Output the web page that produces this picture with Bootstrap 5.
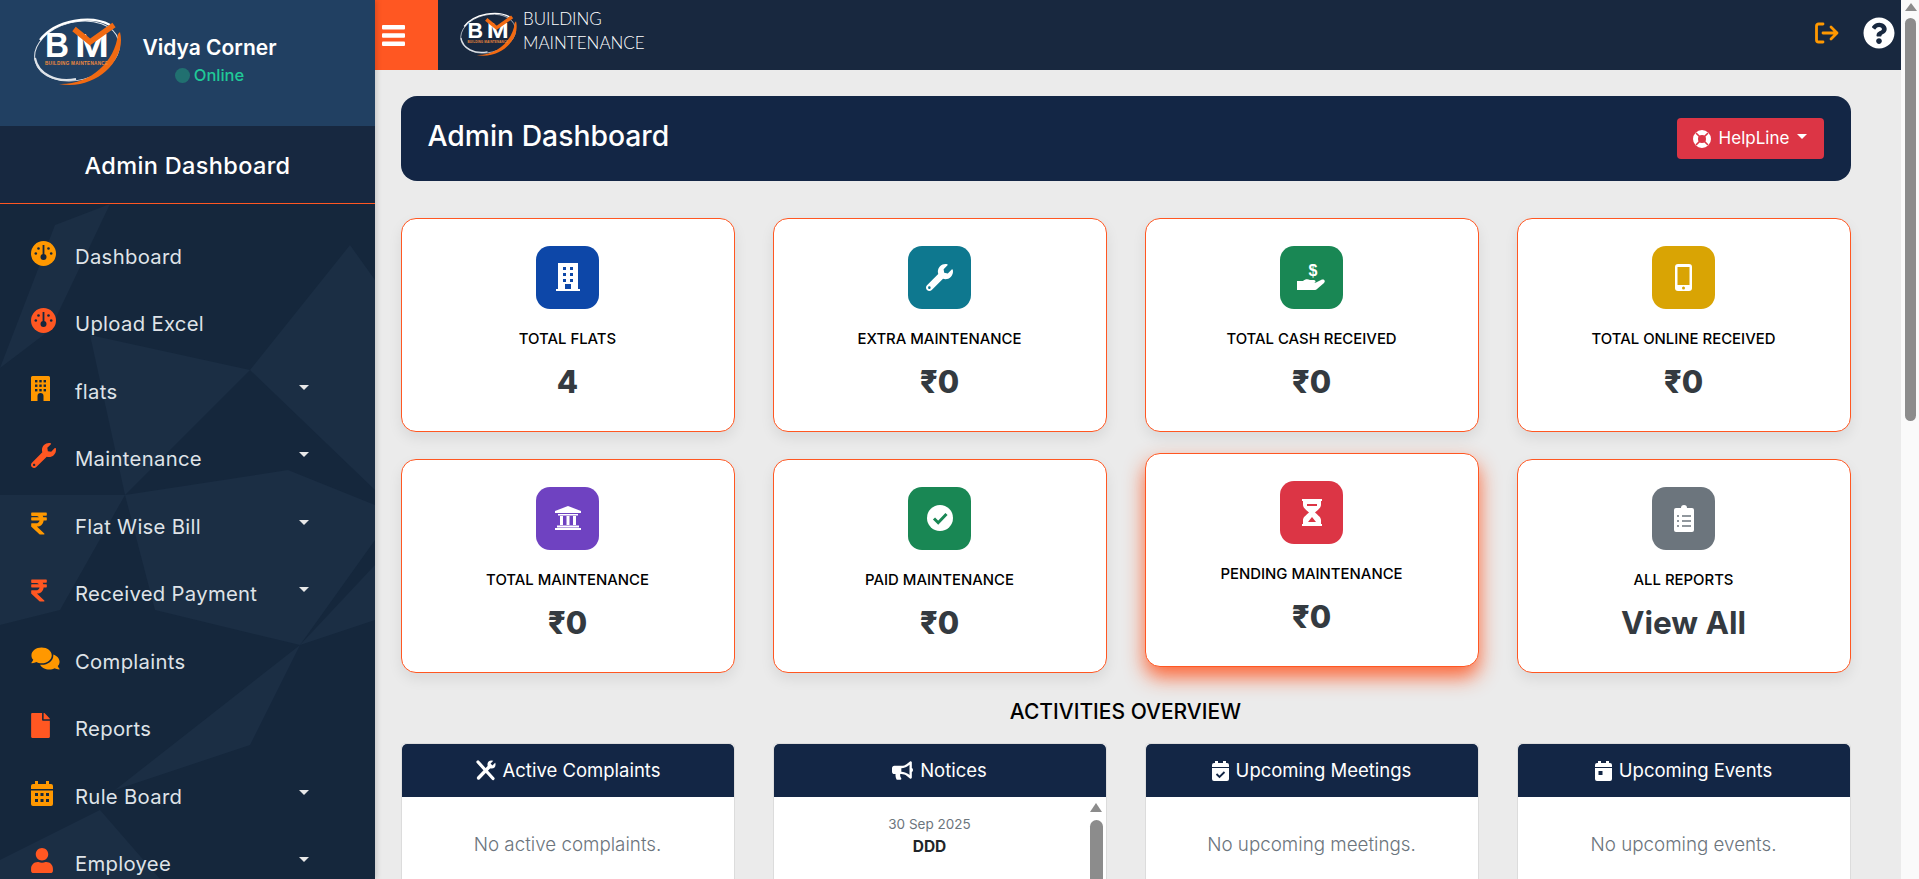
<!DOCTYPE html>
<html lang="en">
<head>
<meta charset="utf-8">
<title>Admin Dashboard</title>
<link href="https://cdn.jsdelivr.net/npm/bootstrap@5.3.0/dist/css/bootstrap.min.css" rel="stylesheet">
<style>
html,body{height:879px;overflow:hidden}
body{font-family:Inter,"Noto Sans",sans-serif;background:#ebebeb}
.app-shell{height:879px}
.side-bar{width:375px;flex:none;position:relative;overflow:hidden;background:#15273c;color:#fff;box-shadow:2px 0 5px rgba(0,0,0,.15);z-index:2}
.side-pattern{position:absolute;left:0;top:0;width:375px;height:879px}
.side-top{height:126px;background:#214062;position:relative}
.side-logo{width:91px;height:71px;margin-left:32px;margin-top:16px;flex:none}
.side-user{margin-left:15px;margin-top:-4px;width:143px;text-align:center}
.user-name{font-size:21px;font-weight:600;line-height:26px;white-space:nowrap}
.user-state{font-size:16.5px;font-weight:500;line-height:24px;color:#20c997;white-space:nowrap;margin-top:2px}
.state-dot{display:inline-block;width:15px;height:15px;border-radius:50%;background:#217070;vertical-align:-2px;margin-right:4px}
.side-title{height:78px;background:#172840;border-bottom:1px solid #ff5722;font-size:23.5px;font-weight:500;letter-spacing:.35px;padding-top:3px;position:relative}
.side-nav{position:relative;padding-top:19px}
.nav-line{height:67.5px;padding-left:31px;color:#dfe3e8;font-size:20.3px;font-weight:400;letter-spacing:.3px;text-decoration:none}
.nav-slot{width:44px;flex:none;display:flex;margin-bottom:7px}
.tone-a{color:#ff9800}
.tone-b{color:#ff5722}
.nav-caret{margin-left:auto;margin-right:66px;margin-bottom:9px;width:0;height:0;border-left:5px solid transparent;border-right:5px solid transparent;border-top:5px solid #e8e8e8}
.main-col{min-width:0;overflow:hidden}
.top-bar{height:70px;background:#18283f;flex:none}
.burger-btn{width:63px;height:70px;background:#ff5722;border:0;border-radius:0;padding:0 0 0 7px}
.top-logo{width:59px;height:46px;margin-left:21px;margin-top:-3px;flex:none}
.top-brand{font-family:Lato,sans-serif;font-weight:300;color:#fff;font-size:17px;line-height:24px;margin-left:5px;margin-top:-8px;white-space:nowrap}
.top-tools{margin-left:auto;padding-right:6px;gap:24px;margin-top:-4px}
.page-body{padding:26px 50.5px 0 25.5px}
.hero-band{height:85px;background:#132645;border-radius:16px;color:#fff;padding:0 27px}
.hero-title{font-size:28.3px;font-weight:500;margin:0 0 4px;line-height:1.2}
.help-btn{width:147px;height:41px;padding:0;font-size:17px;font-weight:400;background:#dc3545;border:0;display:flex;align-items:center;justify-content:center;gap:8px;border-radius:4px}
.stat-grid{--bs-gutter-x:38px;--bs-gutter-y:27px;margin-top:10px}
.stat-box{height:214px;border:1px solid #ff5722;border-radius:15px;box-shadow:0 6px 14px rgba(0,0,0,.08);padding-top:26.5px;text-align:center}
.stat-lift{transform:translateY(-6px);box-shadow:0 10px 20px rgba(255,87,34,.9)}
.stat-tile{width:63px;height:63px;margin:0 auto;border-radius:14px;display:flex;align-items:center;justify-content:center;color:#fff}
.stat-name{font-size:14.9px;font-weight:500;color:#000;line-height:22px;margin-top:19px;white-space:nowrap}
.stat-num{font-size:31px;font-weight:800;color:#343a40;line-height:40px;margin-top:12px}
.stat-big{font-size:31.5px;font-weight:700}
.fill-blue{background:#0d47a8}
.fill-teal{background:#0e788f}
.fill-green{background:#198754}
.fill-gold{background:#d9a404}
.fill-violet{background:#6f42c1}
.fill-red{background:#dc3545}
.fill-grey{background:#6c757d}
.activity-head{font-size:21px;font-weight:500;color:#000;line-height:30px;margin:24px 0 16px;text-align:center}
.panel-grid{--bs-gutter-x:38px;--bs-gutter-y:0}
.panel-box{height:320px;border-radius:4px;border-color:#dcdcdc;overflow:hidden}
.panel-head{height:53px;flex:none;background:#132645;color:#fff;font-size:18.5px;font-weight:400;gap:7px;border:0;border-radius:0;padding:0}
.panel-empty{color:#6c757d;font-size:18.8px;font-weight:300;text-align:center;padding-top:36px;line-height:24px}
.panel-scroll{width:20px;flex:none;padding:6px 3px 0 4px}
.scroll-up{width:0;height:0;border-left:6.5px solid transparent;border-right:6.5px solid transparent;border-bottom:9px solid #8c8c8c;margin-bottom:8px}
.scroll-thumb{width:13px;height:300px;background:#8c8c8c;border-radius:7px;margin-left:0}
.notice-date{color:#6c757d;font-size:13.5px;line-height:20px;margin-top:17px}
.notice-name{color:#212529;font-size:15.5px;font-weight:700;line-height:22px;margin-top:2px}
.page-scroll{width:18px;flex:none;background:#fafafa;padding:3px 3px 0 4px;position:relative;z-index:3}
.page-up{width:0;height:0;border-left:6px solid transparent;border-right:6px solid transparent;border-bottom:8px solid #8c8c8c;margin-bottom:7px}
.page-thumb{width:11px;height:403px;background:#8c8c8c;border-radius:6px}
</style>
</head>
<body>
<svg width="0" height="0" class="d-block" aria-hidden="true">
<defs>
<symbol id="ic-logo" viewBox="0 0 91 71">
<g fill="none">
<ellipse cx="45" cy="35" rx="43" ry="29" transform="rotate(-14 45 35)" stroke="#dfe4ea" stroke-width="1"/>
<path d="M78 9C60-1 24 3 8 24" stroke="#fff" stroke-width="2.200"/>
<path d="M3 42C6 58 24 67 44 63" stroke="#dfe3e8" stroke-width="2"/>
</g>
<path d="M88 16C95 44 64 75 27 68C58 69 83 46 86 18Z" fill="#f26a12"/>
<text x="13" y="41" font-family="Liberation Sans,sans-serif" font-weight="700" font-size="35" fill="#fff" textLength="24" lengthAdjust="spacingAndGlyphs">B</text>
<text x="43" y="41" font-family="Liberation Sans,sans-serif" font-weight="700" font-size="33" fill="#fff" textLength="34" lengthAdjust="spacingAndGlyphs">M</text>
<path d="M42 13L58 26L82 9" fill="none" stroke="#f26a12" stroke-width="5.500"/>
<text x="13" y="49" font-family="Liberation Sans,sans-serif" font-weight="700" font-size="4.600" fill="#f08a3c" textLength="63">BUILDING MAINTENANCE</text>
</symbol>
<symbol id="ic-gauge" viewBox="0 0 25 25">
<circle cx="12.500" cy="12.500" r="12.500" fill="currentColor"/>
<g fill="#15273d"><rect x="11.600" y="4" width="1.800" height="10"/><circle cx="12.500" cy="16" r="3"/><circle cx="7.500" cy="7.500" r="1.300"/><circle cx="17.500" cy="7.500" r="1.300"/><circle cx="4.800" cy="12.500" r="1.300"/><circle cx="20.200" cy="12.500" r="1.300"/></g>
</symbol>
<symbol id="ic-flats" viewBox="0 0 19 25">
<path d="M1.500 0h16A1.500 1.500 0 0 1 19 1.500V25H12.500V20a3 3 0 0 0-6 0V25H0V1.500A1.500 1.500 0 0 1 1.500 0Z" fill="currentColor"/>
<g fill="#15273d"><rect x="4" y="4" width="2.400" height="2.400"/><rect x="8.300" y="4" width="2.400" height="2.400"/><rect x="12.600" y="4" width="2.400" height="2.400"/><rect x="4" y="8.500" width="2.400" height="2.400"/><rect x="8.300" y="8.500" width="2.400" height="2.400"/><rect x="12.600" y="8.500" width="2.400" height="2.400"/><rect x="4" y="13" width="2.400" height="2.400"/><rect x="8.300" y="13" width="2.400" height="2.400"/><rect x="12.600" y="13" width="2.400" height="2.400"/></g>
</symbol>
<symbol id="ic-wrench" viewBox="0 0 512 512"><path fill="currentColor" d="M507.73 109.1c-2.24-9.03-13.54-12.09-20.12-5.51l-74.36 74.36-67.88-11.31-11.31-67.88 74.36-74.36c6.62-6.62 3.43-17.9-5.66-20.16-47.38-11.74-99.55.91-136.58 37.93-39.64 39.64-50.55 97.1-34.05 147.2L18.74 402.76c-24.99 24.99-24.99 65.51 0 90.5 24.99 24.99 65.51 24.99 90.5 0l213.21-213.21c50.12 16.71 107.47 5.68 147.37-34.22 37.07-37.07 49.7-89.32 37.91-136.73zM64 472c-13.25 0-24-10.75-24-24 0-13.26 10.75-24 24-24s24 10.74 24 24c0 13.25-10.75 24-24 24z"/></symbol>
<symbol id="ic-rupee" viewBox="0 0 320 512"><path fill="currentColor" d="M308 96c6.627 0 12-5.373 12-12V44c0-6.627-5.373-12-12-12H12C5.373 32 0 37.373 0 44v44.748c0 6.627 5.373 12 12 12h85.28c27.308 0 48.261 9.958 60.97 27.252H12c-6.627 0-12 5.373-12 12v40c0 6.627 5.373 12 12 12h158.757c-6.217 36.086-32.961 58.632-74.757 58.632H12c-6.627 0-12 5.373-12 12v53.012c0 3.349 1.4 6.546 3.861 8.818l165.052 152.356a12.001 12.001 0 0 0 8.139 3.182h82.562c10.924 0 16.166-13.408 8.139-20.818L116.871 319.906c76.499-2.34 131.144-53.395 138.318-127.906H308c6.627 0 12-5.373 12-12v-40c0-6.627-5.373-12-12-12h-58.69c-3.486-11.541-8.28-22.246-14.252-32H308z"/></symbol>
<symbol id="ic-comments" viewBox="0 0 576 512"><path fill="currentColor" d="M416 192c0-88.4-93.1-160-208-160S0 103.6 0 192c0 34.3 14.1 65.9 38 92-13.4 30.2-35.5 54.2-35.8 54.5-2.2 2.3-2.8 5.7-1.5 8.7S4.8 352 8 352c36.6 0 66.9-12.3 88.7-25 32.2 15.7 70.3 25 111.3 25 114.9 0 208-71.6 208-160zm122 220c23.9-26 38-57.7 38-92 0-66.9-53.5-124.2-129.3-148.1.9 6.6 1.3 13.3 1.3 20.1 0 105.9-107.7 192-240 192-10.8 0-21.3-.8-31.7-1.9C207.8 439.6 281.8 480 368 480c41 0 79.1-9.2 111.3-25 21.8 12.7 52.1 25 88.7 25 3.2 0 6.1-1.9 7.3-4.8 1.3-2.9.7-6.3-1.5-8.7-.3-.3-22.4-24.2-35.8-54.5z"/></symbol>
<symbol id="ic-file" viewBox="0 0 384 512"><path fill="currentColor" d="M224 136V0H24C10.7 0 0 10.7 0 24v464c0 13.3 10.7 24 24 24h336c13.3 0 24-10.7 24-24V160H248c-13.2 0-24-10.8-24-24zm160-14.1v6.1H256V0h6.1c6.4 0 12.5 2.5 17 7l97.9 98c4.5 4.5 7 10.6 7 16.9z"/></symbol>
<symbol id="ic-cal" viewBox="0 0 22 25">
<path fill="currentColor" d="M4 0h3v3h8V0h3v3h2a2 2 0 0 1 2 2v3H0V5a2 2 0 0 1 2-2h2ZM0 9.500h22V23a2 2 0 0 1-2 2H2a2 2 0 0 1-2-2Z"/>
<g fill="#15273d"><rect x="4" y="12" width="3" height="3"/><rect x="9.500" y="12" width="3" height="3"/><rect x="15" y="12" width="3" height="3"/><rect x="4" y="18" width="3" height="3"/><rect x="9.500" y="18" width="3" height="3"/><rect x="15" y="18" width="3" height="3"/></g>
</symbol>
<symbol id="ic-user" viewBox="0 0 448 512"><path fill="currentColor" d="M224 256c70.7 0 128-57.3 128-128S294.7 0 224 0 96 57.3 96 128s57.3 128 128 128zm89.6 32h-16.7c-22.2 10.2-46.9 16-72.9 16s-50.6-5.8-72.9-16h-16.7C60.2 288 0 348.2 0 422.4V464c0 26.5 21.5 48 48 48h352c26.5 0 48-21.5 48-48v-41.6c0-74.2-60.2-134.4-134.4-134.4z"/></symbol>
<symbol id="ic-help" viewBox="0 0 512 512"><path fill="currentColor" d="M504 256c0 136.997-111.043 248-248 248S8 392.997 8 256C8 119.083 119.043 8 256 8s248 111.083 248 248zM262.655 90c-54.497 0-89.255 22.957-116.549 63.758-3.536 5.286-2.353 12.415 2.715 16.258l34.699 26.31c5.205 3.947 12.621 3.008 16.665-2.122 17.864-22.658 30.113-35.797 57.303-35.797 20.429 0 45.698 13.148 45.698 32.958 0 14.976-12.363 22.667-32.534 33.976C247.128 238.528 216 254.941 216 296v4c0 6.627 5.373 12 12 12h56c6.627 0 12-5.373 12-12v-1.333c0-28.462 83.186-29.647 83.186-106.667 0-58.002-60.165-102-116.531-102zM256 338c-25.365 0-46 20.635-46 46 0 25.364 20.635 46 46 46s46-20.636 46-46c0-25.365-20.635-46-46-46z"/></symbol>
<symbol id="ic-bullhorn" viewBox="0 0 576 512"><path fill="currentColor" d="M576 240c0-23.63-12.95-44.04-32-55.12V32.01C544 23.26 537.02 0 512 0c-7.12 0-14.19 2.38-19.98 7.02l-85.03 68.03C364.28 109.19 310.66 128 256 128H64c-35.35 0-64 28.65-64 64v96c0 35.35 28.65 64 64 64h33.7c-1.39 10.48-2.18 21.14-2.18 32 0 39.77 9.26 77.35 25.56 110.94 5.19 10.69 16.52 17.06 28.4 17.06h74.28c26.05 0 41.69-29.84 25.9-50.56-16.4-21.52-26.15-48.36-26.15-77.44 0-11.11 1.62-21.79 4.41-32H256c54.66 0 108.28 18.81 150.98 52.95l85.03 68.03a32.023 32.023 0 0 0 19.98 7.02c24.92 0 32-22.78 32-32V295.13C563.05 284.04 576 263.63 576 240zm-96 141.42l-33.05-26.44C392.95 311.78 325.12 288 256 288v-96c69.12 0 136.95-23.78 190.95-66.98L480 98.58v282.84z"/></symbol>
</defs>
</svg>

<div class="app-shell d-flex">
  <aside class="side-bar">
    <svg class="side-pattern" viewBox="0 0 375 879" aria-hidden="true">
      <g fill="#1b2e44">
        <polygon points="90,335 250,370 125,495"/>
        <polygon points="250,370 350,245 375,280 375,490"/>
        <polygon points="0,495 125,495 60,610 0,625"/>
        <polygon points="125,495 288,470 375,505 375,540 300,645 155,610"/>
        <polygon points="300,645 250,745 115,790"/>
        <polygon points="300,645 375,620 375,565"/>
        <polygon points="55,225 110,204 50,330 0,368"/>
        <polygon points="100,810 0,860 0,879 160,879"/>
      </g>
    </svg>
    <div class="side-top d-flex align-items-start">
      <svg class="side-logo"><use href="#ic-logo"/></svg>
      <div class="side-user align-self-center">
        <div class="user-name">Vidya Corner</div>
        <div class="user-state"><span class="state-dot"></span>Online</div>
      </div>
    </div>
    <div class="side-title d-flex align-items-center justify-content-center">Admin Dashboard</div>
    <nav class="side-nav d-flex flex-column">
      <a class="nav-line d-flex align-items-center" href="#"><span class="nav-slot tone-a"><svg width="25" height="25"><use href="#ic-gauge"/></svg></span>Dashboard</a>
      <a class="nav-line d-flex align-items-center" href="#"><span class="nav-slot tone-b"><svg width="25" height="25"><use href="#ic-gauge"/></svg></span>Upload Excel</a>
      <a class="nav-line d-flex align-items-center" href="#"><span class="nav-slot tone-a"><svg width="19" height="25"><use href="#ic-flats"/></svg></span>flats<span class="nav-caret"></span></a>
      <a class="nav-line d-flex align-items-center" href="#"><span class="nav-slot tone-b"><svg width="25" height="25"><use href="#ic-wrench"/></svg></span>Maintenance<span class="nav-caret"></span></a>
      <a class="nav-line d-flex align-items-center" href="#"><span class="nav-slot tone-a"><svg width="16" height="25"><use href="#ic-rupee"/></svg></span>Flat Wise Bill<span class="nav-caret"></span></a>
      <a class="nav-line d-flex align-items-center" href="#"><span class="nav-slot tone-b"><svg width="16" height="25"><use href="#ic-rupee"/></svg></span>Received Payment<span class="nav-caret"></span></a>
      <a class="nav-line d-flex align-items-center" href="#"><span class="nav-slot tone-a"><svg width="29" height="25"><use href="#ic-comments"/></svg></span>Complaints</a>
      <a class="nav-line d-flex align-items-center" href="#"><span class="nav-slot tone-b"><svg width="19" height="25"><use href="#ic-file"/></svg></span>Reports</a>
      <a class="nav-line d-flex align-items-center" href="#"><span class="nav-slot tone-a"><svg width="22" height="25"><use href="#ic-cal"/></svg></span>Rule Board<span class="nav-caret"></span></a>
      <a class="nav-line d-flex align-items-center" href="#"><span class="nav-slot tone-b"><svg width="22" height="25"><use href="#ic-user"/></svg></span>Employee<span class="nav-caret"></span></a>
    </nav>
  </aside>

  <div class="main-col flex-grow-1 d-flex flex-column">
    <header class="top-bar d-flex align-items-center">
      <button class="burger-btn btn d-flex align-items-center" type="button" aria-label="Menu">
        <svg width="23" height="21" viewBox="0 0 23 21" fill="#fff"><rect width="23" height="4.500" rx="1"/><rect y="8.200" width="23" height="4.500" rx="1"/><rect y="16.500" width="23" height="4.500" rx="1"/></svg>
      </button>
      <svg class="top-logo"><use href="#ic-logo"/></svg>
      <div class="top-brand">BUILDING<br>MAINTENANCE</div>
      <div class="top-tools d-flex align-items-center">
        <svg width="24" height="22" viewBox="0 0 24 22" fill="none" stroke="#ff9800" stroke-width="2.800" stroke-linecap="round" stroke-linejoin="round"><path d="M8 2H3.500A2 2 0 0 0 1.500 4v14a2 2 0 0 0 2 2H8"/><path d="M8 11h14M16 5l6 6-6 6"/></svg>
        <svg width="32" height="32" class="text-white"><use href="#ic-help"/></svg>
      </div>
    </header>

    <main class="page-body">
      <section class="hero-band d-flex align-items-center justify-content-between">
        <h1 class="hero-title">Admin Dashboard</h1>
        <button class="help-btn btn btn-danger" type="button">
          <svg width="18" height="18" viewBox="0 0 18 18"><circle cx="9" cy="9" r="6.500" fill="none" stroke="#fff" stroke-width="5"/><g stroke="#dc3545" stroke-width="1.600"><path d="M3 3l3.500 3.500M15 3l-3.500 3.500M3 15l3.500-3.500M15 15l-3.500-3.500"/></g></svg>
          <span>HelpLine</span><span class="dropdown-toggle"></span>
        </button>
      </section>

      <section class="row stat-grid">
        <div class="col-3"><div class="card stat-box"><div class="stat-tile fill-blue"><svg width="24" height="28" viewBox="0 0 24 28" fill="#fff"><path d="M2 0h20v26H15v-5H9v5H2Z"/><rect y="26" width="24" height="2"/><g fill="#0d47a8"><rect x="7" y="4" width="3" height="3"/><rect x="14" y="4" width="3" height="3"/><rect x="7" y="10" width="3" height="3"/><rect x="14" y="10" width="3" height="3"/><rect x="7" y="16" width="3" height="3"/><rect x="14" y="16" width="3" height="3"/></g></svg></div><div class="stat-name">TOTAL FLATS</div><div class="stat-num">4</div></div></div>
        <div class="col-3"><div class="card stat-box"><div class="stat-tile fill-teal"><svg width="27" height="27" class="text-white"><use href="#ic-wrench"/></svg></div><div class="stat-name">EXTRA MAINTENANCE</div><div class="stat-num">₹0</div></div></div>
        <div class="col-3"><div class="card stat-box"><div class="stat-tile fill-green"><svg width="30" height="28" viewBox="0 0 30 28" fill="#fff"><text x="16" y="13" text-anchor="middle" font-family="Liberation Sans,sans-serif" font-weight="700" font-size="16" fill="#fff">$</text><path d="M0 18h6c2-2 5-2 7-1h4c2 0 2 3 0 3h-4l5 0 6-3c3-1.500 5 1 3 3l-7 6a3 3 0 0 1-2 1H0Z"/></svg></div><div class="stat-name">TOTAL CASH RECEIVED</div><div class="stat-num">₹0</div></div></div>
        <div class="col-3"><div class="card stat-box"><div class="stat-tile fill-gold"><svg width="17" height="27" viewBox="0 0 17 27"><rect width="17" height="27" rx="3" fill="#fff"/><rect x="2.500" y="3" width="12" height="18" fill="#d9a404"/><circle cx="8.500" cy="24" r="1.500" fill="#d9a404"/></svg></div><div class="stat-name">TOTAL ONLINE RECEIVED</div><div class="stat-num">₹0</div></div></div>
        <div class="col-3"><div class="card stat-box"><div class="stat-tile fill-violet"><svg width="26" height="24" viewBox="0 0 26 24" fill="#fff"><path d="M13 0l13 5v2H0V5Z"/><rect x="3" y="8" width="20" height="1.500"/><rect x="5" y="10" width="3" height="9"/><rect x="11.500" y="10" width="3" height="9"/><rect x="18" y="10" width="3" height="9"/><rect x="2" y="19.500" width="22" height="2"/><rect y="22" width="26" height="2"/></svg></div><div class="stat-name">TOTAL MAINTENANCE</div><div class="stat-num">₹0</div></div></div>
        <div class="col-3"><div class="card stat-box"><div class="stat-tile fill-green"><svg width="26" height="26" viewBox="0 0 26 26"><circle cx="13" cy="13" r="13" fill="#fff"/><path d="M7 13.500l4.200 4.200L19.500 9" fill="none" stroke="#198754" stroke-width="3"/></svg></div><div class="stat-name">PAID MAINTENANCE</div><div class="stat-num">₹0</div></div></div>
        <div class="col-3"><div class="card stat-box stat-lift"><div class="stat-tile fill-red"><svg width="20" height="27" viewBox="0 0 20 27"><path fill="#fff" d="M1 0h18a1 1 0 0 1 1 2h-1v4c0 3-4 5.500-6 7.500 2 2 6 4.500 6 7.500v4h1a1 1 0 0 1-1 2H1a1 1 0 0 1-1-2h1v-4c0-3 4-5.500 6-7.500C5 11.500 1 9 1 6V2H0a1 1 0 0 1 1-2Z"/><path fill="#dc3545" d="M5 5h10v2H5ZM10 18l4 5H6Z"/></svg></div><div class="stat-name">PENDING MAINTENANCE</div><div class="stat-num">₹0</div></div></div>
        <div class="col-3"><div class="card stat-box"><div class="stat-tile fill-grey"><svg width="20" height="27" viewBox="0 0 20 27"><path fill="#fff" d="M2 3h5a3 3 0 0 1 6 0h5a2 2 0 0 1 2 2v20a2 2 0 0 1-2 2H2a2 2 0 0 1-2-2V5a2 2 0 0 1 2-2Z"/><g stroke="#6c757d" stroke-width="1.300"><path d="M8 11h9M8 16h9M8 21h9"/><path d="M3 11h2M3 16h2M3 21h2"/></g></svg></div><div class="stat-name">ALL REPORTS</div><div class="stat-num stat-big">View All</div></div></div>
      </section>

      <h2 class="activity-head">ACTIVITIES OVERVIEW</h2>

      <section class="row panel-grid">
        <div class="col-3"><div class="card panel-box">
          <div class="card-header panel-head d-flex align-items-center justify-content-center">
            <svg width="21" height="21" viewBox="0 0 21 21" fill="none" stroke="#fff"><path d="M3 2l15 16.500" stroke-width="3.200" stroke-linecap="round"/><path d="M16 5L3.500 18" stroke-width="3.400" stroke-linecap="round"/><circle cx="16.500" cy="4.500" r="4" fill="#fff" stroke="none"/><path d="M16.500 4.500L20 1" stroke="#132645" stroke-width="2.600"/></svg>
            <span>Active Complaints</span>
          </div>
          <div class="panel-empty">No active complaints.</div>
        </div></div>
        <div class="col-3"><div class="card panel-box">
          <div class="card-header panel-head d-flex align-items-center justify-content-center">
            <svg width="21" height="19" class="text-white"><use href="#ic-bullhorn"/></svg>
            <span>Notices</span>
          </div>
          <div class="d-flex">
            <div class="flex-grow-1 text-center">
              <div class="notice-date">30 Sep 2025</div>
              <div class="notice-name">DDD</div>
            </div>
            <div class="panel-scroll"><div class="scroll-up"></div><div class="scroll-thumb"></div></div>
          </div>
        </div></div>
        <div class="col-3"><div class="card panel-box">
          <div class="card-header panel-head d-flex align-items-center justify-content-center">
            <svg width="17" height="20" viewBox="0 0 17 20" fill="#fff"><path d="M3 0h3v2h5V0h3v2h1a2 2 0 0 1 2 2v2H0V4a2 2 0 0 1 2-2h1ZM0 7h17v11a2 2 0 0 1-2 2H2a2 2 0 0 1-2-2Z"/><path d="M4.500 13l3 3 5-5" fill="none" stroke="#132645" stroke-width="1.800"/></svg>
            <span>Upcoming Meetings</span>
          </div>
          <div class="panel-empty">No upcoming meetings.</div>
        </div></div>
        <div class="col-3"><div class="card panel-box">
          <div class="card-header panel-head d-flex align-items-center justify-content-center">
            <svg width="17" height="20" viewBox="0 0 17 20" fill="#fff"><path d="M3 0h3v2h5V0h3v2h1a2 2 0 0 1 2 2v2H0V4a2 2 0 0 1 2-2h1ZM0 7h17v11a2 2 0 0 1-2 2H2a2 2 0 0 1-2-2Z"/><rect x="3.500" y="10" width="4" height="4" fill="#132645"/></svg>
            <span>Upcoming Events</span>
          </div>
          <div class="panel-empty">No upcoming events.</div>
        </div></div>
      </section>
    </main>
  </div>

  <div class="page-scroll"><div class="page-up"></div><div class="page-thumb"></div></div>
</div>
<script src="https://cdn.jsdelivr.net/npm/bootstrap@5.3.0/dist/js/bootstrap.bundle.min.js"></script>
</body>
</html>
